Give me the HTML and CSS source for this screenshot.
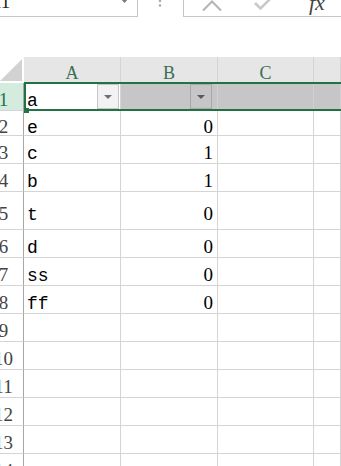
FILE: index.html
```html
<!DOCTYPE html>
<html>

<head>
  <title>Sheet1</title>
  <link rel="stylesheet" href="styles.css">
</head>

<body>
  <div class="app">
    <div class="formula-bar">
      <div class="name-box">
        <span class="cell-ref">A1</span>
        <svg class="name-caret" width="9" height="4" viewBox="0 0 9 4">
          <path d="M0 -2 L4.5 3 L9 -2 Z" />
        </svg>
      </div>
      <div class="bar-grip">
        <svg width="4" height="8" viewBox="0 0 4 8">
          <circle cx="2" cy="1" r="1.2" />
          <circle cx="2" cy="5.5" r="1.2" />
        </svg>
      </div>
      <div class="formula-box">
        <svg class="icon-cancel" width="22" height="12" viewBox="0 0 22 12">
          <path d="M3 10.5 L12 1.5 L21 10.5" />
        </svg>
        <svg class="icon-enter" width="22" height="12" viewBox="0 0 22 12">
          <path d="M3 3 L8.5 8.5 L19 -2" />
        </svg>
        <span class="fx">fx</span>
      </div>
    </div>

    <div class="sheet">
      <!-- column headers -->
      <div class="corner">
        <svg width="22" height="22" viewBox="0 0 22 22">
          <path d="M22 0 L22 22 L0 22 Z" />
        </svg>
      </div>
      <div class="col-head">A</div>
      <div class="col-head">B</div>
      <div class="col-head">C</div>
      <div class="col-head"></div>

      <!-- row 1, selected -->
      <div class="row-head is-active"><span>1</span></div>
      <div class="cell"><span class="val">a</span><span class="filter-btn"></span></div>
      <div class="cell is-selected"><span class="filter-btn"></span></div>
      <div class="cell is-selected"></div>
      <div class="cell is-selected"></div>

      <div class="row-head"><span>2</span></div>
      <div class="cell"><span class="val">e</span></div>
      <div class="cell num"><span class="val">0</span></div>
      <div class="cell"></div>
      <div class="cell"></div>

      <div class="row-head"><span>3</span></div>
      <div class="cell"><span class="val">c</span></div>
      <div class="cell num"><span class="val">1</span></div>
      <div class="cell"></div>
      <div class="cell"></div>

      <div class="row-head"><span>4</span></div>
      <div class="cell"><span class="val">b</span></div>
      <div class="cell num"><span class="val">1</span></div>
      <div class="cell"></div>
      <div class="cell"></div>

      <div class="row-head"><span>5</span></div>
      <div class="cell"><span class="val">t</span></div>
      <div class="cell num"><span class="val">0</span></div>
      <div class="cell"></div>
      <div class="cell"></div>

      <div class="row-head"><span>6</span></div>
      <div class="cell"><span class="val">d</span></div>
      <div class="cell num"><span class="val">0</span></div>
      <div class="cell"></div>
      <div class="cell"></div>

      <div class="row-head"><span>7</span></div>
      <div class="cell"><span class="val">ss</span></div>
      <div class="cell num"><span class="val">0</span></div>
      <div class="cell"></div>
      <div class="cell"></div>

      <div class="row-head"><span>8</span></div>
      <div class="cell"><span class="val">ff</span></div>
      <div class="cell num"><span class="val">0</span></div>
      <div class="cell"></div>
      <div class="cell"></div>

      <div class="row-head"><span>9</span></div>
      <div class="cell"></div>
      <div class="cell"></div>
      <div class="cell"></div>
      <div class="cell"></div>

      <div class="row-head"><span>10</span></div>
      <div class="cell"></div>
      <div class="cell"></div>
      <div class="cell"></div>
      <div class="cell"></div>

      <div class="row-head"><span>11</span></div>
      <div class="cell"></div>
      <div class="cell"></div>
      <div class="cell"></div>
      <div class="cell"></div>

      <div class="row-head"><span>12</span></div>
      <div class="cell"></div>
      <div class="cell"></div>
      <div class="cell"></div>
      <div class="cell"></div>

      <div class="row-head"><span>13</span></div>
      <div class="cell"></div>
      <div class="cell"></div>
      <div class="cell"></div>
      <div class="cell"></div>

      <div class="row-head"><span>14</span></div>
      <div class="cell"></div>
      <div class="cell"></div>
      <div class="cell"></div>
      <div class="cell"></div>

      <!-- green selection frame over row 1 -->
      <div class="selection"><span class="fill-handle"></span></div>
    </div>
  </div>
</body>

</html>
```

FILE: styles.css
```css
body {
  margin: 0;
  background-color: #fff;
  overflow: hidden;
  font-family: 'Liberation Serif', serif;
  color: #000;
}

.app {
  margin-left: -16px;
}

/* Formula bar */
.formula-bar {
  display: flex;
  height: 17px;
  overflow: hidden;
}

.name-box {
  display: flex;
  align-items: flex-start;
  width: 154px;
  box-sizing: border-box;
  padding-left: 3px;
  border-right: 1px solid #c6c6c6;
  border-bottom: 1px solid #c6c6c6;
}

.cell-ref {
  font-size: 19px;
  line-height: 19px;
  margin-top: -8px;
  color: #222;
}

.name-caret {
  margin-left: auto;
  margin-right: 8px;
  fill: #7a7a7a;
}

.bar-grip {
  width: 45px;
  box-sizing: border-box;
  padding-left: 20px;
  fill: #a8a8a8;
}

.bar-grip svg {
  display: block;
}

.formula-box {
  flex: 1;
  display: flex;
  align-items: flex-start;
  border-left: 1px solid #c6c6c6;
  border-bottom: 1px solid #c6c6c6;
}

.formula-box svg {
  display: block;
  fill: none;
  stroke-width: 2;
}

.icon-cancel {
  margin-left: 16px;
  stroke: #b4b4b4;
}

.icon-enter {
  margin-left: 30px;
  stroke: #c9c9c9;
  stroke-width: 2.6 !important;
}

.fx {
  margin-left: 35px;
  margin-top: -10px;
  font-size: 22px;
  font-style: italic;
  color: #444;
}

/* Sheet grid */
.sheet {
  position: relative;
  display: grid;
  grid-template-columns: 40px 97px 97px 96px 1fr;
  grid-template-rows: 26px 28px 25px 28px 28px 38px repeat(9, 28px);
  margin-top: 40px;
}

.corner {
  display: flex;
  justify-content: flex-end;
  align-items: flex-end;
  padding: 0 2px 2px 0;
}

.corner svg {
  display: block;
  fill: #d2d2d2;
}

.col-head {
  display: flex;
  justify-content: center;
  align-items: center;
  box-sizing: border-box;
  padding-top: 8px;
  background-color: #e6e6e6;
  border-right: 1px solid #d4d4d4;
  border-bottom: 1px solid #d4d4d4;
  font-size: 18px;
  color: #3a6f55;
}

.row-head {
  display: flex;
  justify-content: center;
  align-items: center;
  box-sizing: border-box;
  border-right: 1px solid #a6a6a6;
  border-bottom: 1px solid #d4d4d4;
  font-size: 19px;
  color: #444;
}

.row-head span {
  padding-top: 7px;
}

.row-head.is-active {
  background-color: #d3ecdd;
  color: #217346;
}

.cell {
  display: flex;
  align-items: center;
  box-sizing: border-box;
  padding: 0 4px 0 3px;
  border-right: 1px solid #d4d4d4;
  border-bottom: 1px solid #d4d4d4;
  font-family: 'Liberation Mono', monospace;
  font-size: 18px;
}

.cell .val {
  padding-top: 9px;
}

.cell.num {
  justify-content: flex-end;
  font-family: 'Liberation Serif', serif;
  font-size: 19px;
}

.cell.num .val {
  padding-top: 7px;
}

.cell.is-selected {
  background-color: #c6c6c6;
  border-right-color: #d0d0d0;
}

/* Filter dropdown buttons */
.filter-btn {
  display: flex;
  justify-content: center;
  align-items: center;
  align-self: stretch;
  width: 22px;
  margin: 1px -3px 1px auto;
  box-sizing: border-box;
  background-color: #f2f2f2;
  border: 1px solid #c6c6c6;
}

.filter-btn::after {
  content: "";
  border-left: 4px solid transparent;
  border-right: 4px solid transparent;
  border-top: 4px solid #707070;
}

.is-selected .filter-btn {
  margin-right: 1px;
  background-color: #c6c6c6;
  border-color: #a8a8a8;
}

.is-selected .filter-btn::after {
  border-top-color: #5a5a5a;
}

/* Selection frame, laid over row 1 */
.selection {
  position: absolute;
  grid-row: 2 / 3;
  grid-column: 2 / -1;
  top: -1px;
  left: 0;
  right: 0;
  bottom: 0;
  border: 2px solid #217346;
  border-right: none;
  z-index: 1;
  pointer-events: none;
}

.fill-handle {
  position: absolute;
  left: -2px;
  bottom: -4px;
  width: 5px;
  height: 5px;
  background-color: #217346;
}
```
